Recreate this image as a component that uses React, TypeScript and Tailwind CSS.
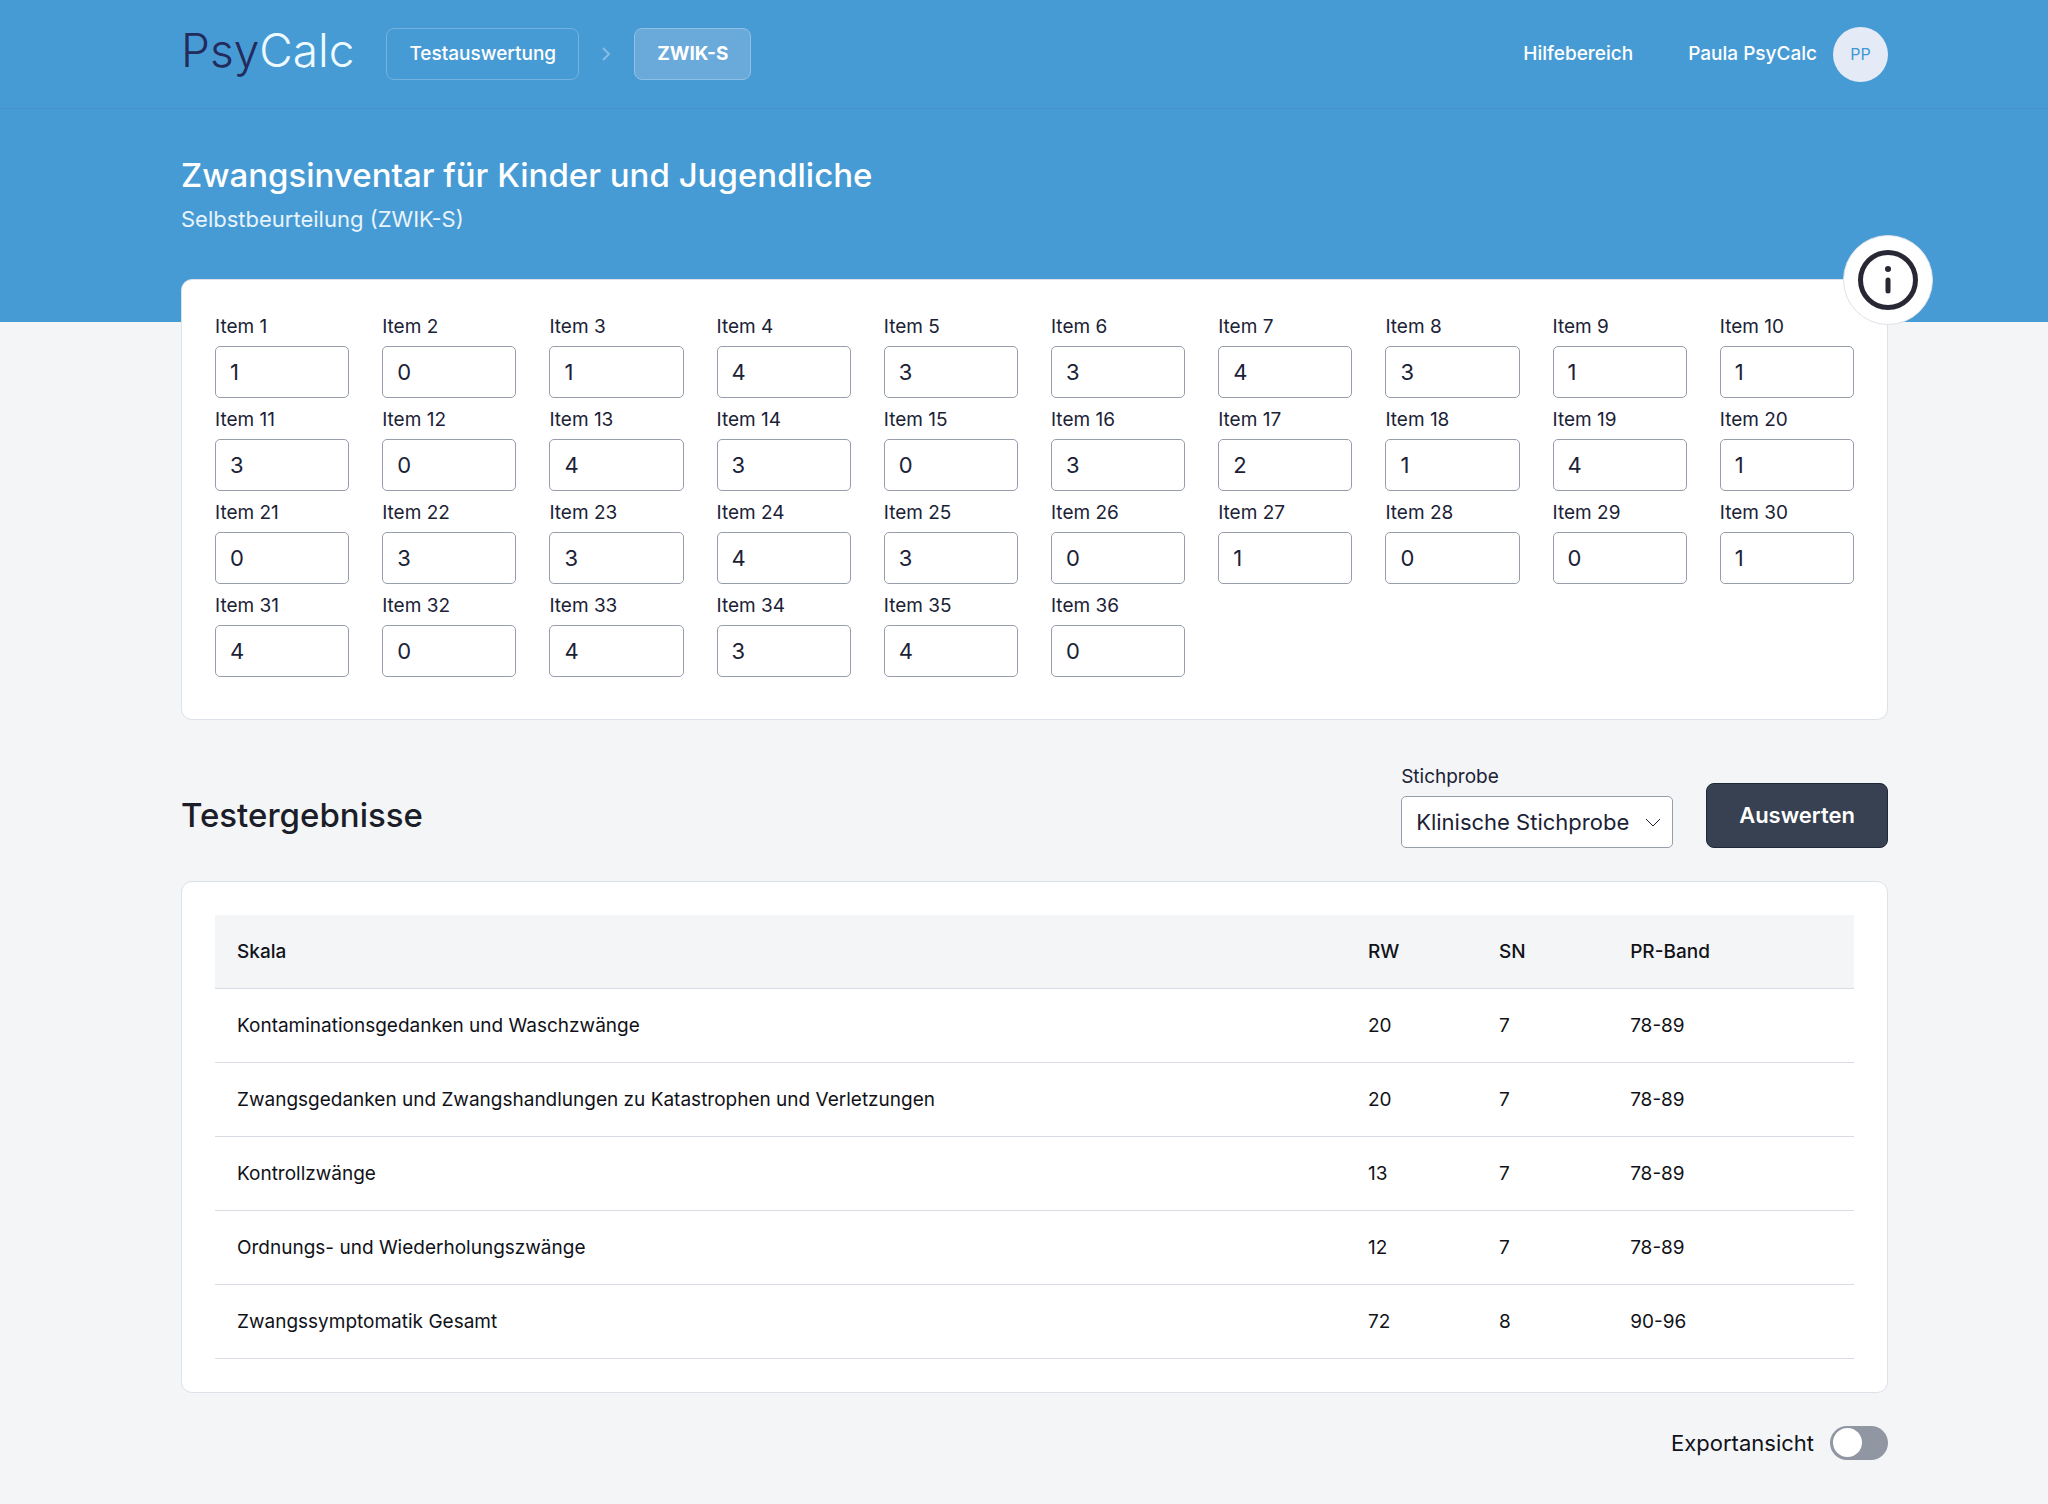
import React, { useState } from 'react';

interface Result {
    scale: string;
    raw: number;
    sn: number;
    band: string;
}

const ANSWERS = [
    1, 0, 1, 4, 3, 3, 4, 3, 1, 1,
    3, 0, 4, 3, 0, 3, 2, 1, 4, 1,
    0, 3, 3, 4, 3, 0, 1, 0, 0, 1,
    4, 0, 4, 3, 4, 0,
];

const RESULTS: Result[] = [
    { scale: 'Kontaminationsgedanken und Waschzwänge', raw: 20, sn: 7, band: '78-89' },
    { scale: 'Zwangsgedanken und Zwangshandlungen zu Katastrophen und Verletzungen', raw: 20, sn: 7, band: '78-89' },
    { scale: 'Kontrollzwänge', raw: 13, sn: 7, band: '78-89' },
    { scale: 'Ordnungs- und Wiederholungszwänge', raw: 12, sn: 7, band: '78-89' },
    { scale: 'Zwangssymptomatik Gesamt', raw: 72, sn: 8, band: '90-96' },
];

const Header: React.FC = () => (
    <header className="border-b border-[#4692cb]">
        <div className="flex h-[108px] items-center justify-between pl-[181px] pr-40 text-[19px] font-medium text-white">
            <div className="flex items-center">
                <a href="#" className="mr-8 pb-2 text-[46px] leading-[52px] font-light text-[#edfaff]">
                    <span className="text-[#232a5c]">Psy</span>Calc
                </a>
                <a href="#" className="flex h-[52px] items-center rounded-lg border border-[#74b2e0] px-[22px]">
                    Testauswertung
                </a>
                <svg className="mx-[22px] h-4 w-[11px]" viewBox="0 0 11 16" fill="none" stroke="#86bde6" strokeWidth="2">
                    <path d="M2 2l6 6-6 6" />
                </svg>
                <a href="#" className="flex h-[52px] items-center rounded-lg border border-[#8ec0e5] bg-[#69aadb] px-[22px] font-bold">
                    ZWIK-S
                </a>
            </div>
            <div className="flex items-center">
                <a href="#" className="mr-[55px]">Hilfebereich</a>
                <button type="button" className="flex items-center gap-4">
                    Paula PsyCalc
                    <span className="flex h-[55px] w-[55px] items-center justify-center rounded-full bg-[#e4ebf7] text-base font-normal text-[#3d97d3]">
                        PP
                    </span>
                </button>
            </div>
        </div>
    </header>
);

const ItemForm: React.FC = () => (
    <form className="relative rounded-[11px] border border-[#dde1e8] bg-white px-[33px] pt-[33px] pb-[42px]">
        <div className="grid grid-cols-10 gap-x-[33px] gap-y-2">
            {ANSWERS.map((value, i) => (
                <div key={i}>
                    <label htmlFor={`item-${i + 1}`} className="mb-[5px] block text-[19px] leading-[28px]">
                        Item {i + 1}
                    </label>
                    <input
                        id={`item-${i + 1}`}
                        type="text"
                        inputMode="numeric"
                        defaultValue={value}
                        className="block h-[52px] w-full rounded-[5px] border border-[#979dab] bg-white px-[14px] text-[22px]"
                    />
                </div>
            ))}
        </div>
        <button
            type="button"
            aria-label="Information"
            className="absolute -top-[45px] -right-[46px] h-[90px] w-[90px] rounded-full border border-[#dde1e8] bg-white"
        >
            <svg className="h-full w-full" viewBox="0 0 88 88" fill="none">
                <circle cx="44" cy="44" r="27.5" stroke="#272833" strokeWidth="5" />
                <circle cx="44" cy="33" r="3" fill="#272833" />
                <path d="M44 44v11" stroke="#272833" strokeWidth="5" strokeLinecap="round" />
            </svg>
        </button>
    </form>
);

const ResultTable: React.FC = () => (
    <div className="rounded-[11px] border border-[#dde1e8] bg-white p-[33px]">
        <table className="w-full table-fixed text-left text-[19px] leading-[27px] text-[#111218]">
            <thead>
                <tr className="h-[73px] border-b border-[#d8dce3] bg-[#f3f5f7]">
                    <th className="w-[69%] px-[22px] font-medium">Skala</th>
                    <th className="w-[8%] px-[22px] font-medium">RW</th>
                    <th className="w-[8%] px-[22px] font-medium">SN</th>
                    <th className="w-[15%] px-[22px] font-medium">PR-Band</th>
                </tr>
            </thead>
            <tbody>
                {RESULTS.map(r => (
                    <tr key={r.scale} className="h-[74px] border-b border-[#d8dce3]">
                        <td className="px-[22px]">{r.scale}</td>
                        <td className="px-[22px]">{r.raw}</td>
                        <td className="px-[22px]">{r.sn}</td>
                        <td className="px-[22px]">{r.band}</td>
                    </tr>
                ))}
            </tbody>
        </table>
    </div>
);

export default function App() {
    const [exportView, setExportView] = useState(false);

    return (
        <div className="min-h-screen bg-[#f4f5f7] font-[Inter,sans-serif] text-[#1b2236]">
            {/* Blue hero, the item form overlaps its lower edge */}
            <div className="bg-[#479bd4] pb-[87px]">
                <Header />
                <div className="pt-[44px] pl-[181px] pr-40 text-white">
                    <h1 className="text-[33px] leading-[44px] font-medium">Zwangsinventar für Kinder und Jugendliche</h1>
                    <p className="mt-[6px] text-[22px] leading-[32px] text-[#e8f4fd]">Selbstbeurteilung (ZWIK-S)</p>
                </div>
            </div>

            <main className="-mt-[43px] pl-[181px] pr-40 pb-10">
                <ItemForm />

                <div className="mt-[43px] mb-[33px] flex items-end justify-between">
                    <h2 className="mb-[11px] text-[33px] leading-[44px] font-medium text-[#1b1d28]">Testergebnisse</h2>
                    <div className="flex items-end gap-[33px]">
                        <div>
                            <label htmlFor="sample" className="mb-[5px] block text-[19px] leading-[28px]">Stichprobe</label>
                            <div className="relative">
                                <select
                                    id="sample"
                                    className="block h-[52px] w-[272px] appearance-none rounded-[5px] border border-[#979dab] bg-white pl-[14px] pr-10 text-[22px]"
                                >
                                    <option>Klinische Stichprobe</option>
                                    <option>Normstichprobe</option>
                                </select>
                                <svg className="pointer-events-none absolute top-[22px] right-3 h-[9px] w-4" viewBox="0 0 16 9" fill="none" stroke="#1b2236">
                                    <path d="M1 1l7 7 7-7" />
                                </svg>
                            </div>
                        </div>
                        <button type="button" className="h-[65px] rounded-lg border border-[#1f2937] bg-[#374151] px-8 text-[22px] font-semibold text-white">
                            Auswerten
                        </button>
                    </div>
                </div>

                <ResultTable />

                <div className="mt-[33px] flex items-center justify-end gap-4">
                    <label htmlFor="export" className="text-[22px] leading-[34px] text-[#111218]">Exportansicht</label>
                    <input
                        id="export"
                        type="checkbox"
                        role="switch"
                        checked={exportView}
                        onChange={e => setExportView(e.target.checked)}
                        className="flex h-[34px] w-[58px] appearance-none items-center rounded-full bg-[#9196a3] px-[3px] before:h-[29px] before:w-[29px] before:rounded-full before:bg-white checked:justify-end checked:bg-[#479bd4]"
                    />
                </div>
            </main>
        </div>
    );
}
